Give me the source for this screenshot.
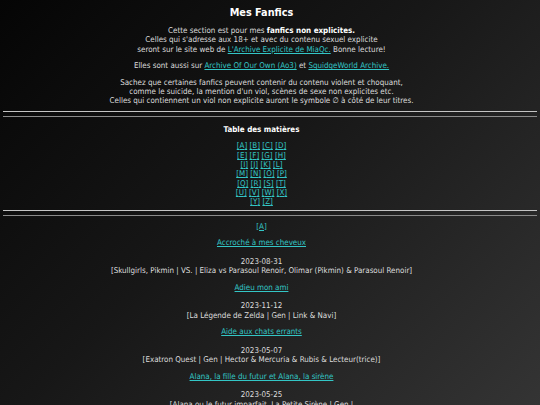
const font = { fontFamily: '"DejaVu Sans Condensed", "DejaVu Sans", Verdana, sans-serif' };

const rows = [
  ["A", "B", "C", "D"],
  ["E", "F", "G", "H"],
  ["I", "J", "K", "L"],
  ["M", "N", "O", "P"],
  ["Q", "R", "S", "T"],
  ["U", "V", "W", "X"],
  ["Y", "Z"],
];

const fics = [
  {
    title: "Accroché à mes cheveux",
    date: "2023-08-31",
    tags: "[Skullgirls, Pikmin | VS. | Eliza vs Parasoul Renoir, Olimar (Pikmin) & Parasoul Renoir]",
  },
  { title: "Adieu mon ami", date: "2023-11-12", tags: "[La Légende de Zelda | Gen | Link & Navi]" },
  {
    title: "Aide aux chats errants",
    date: "2023-05-07",
    tags: "[Exatron Quest | Gen | Hector & Mercuria & Rubis & Lecteur(trice)]",
  },
  {
    title: "Alana, la fille du futur et Alana, la sirène",
    date: "2023-05-25",
    tags: "[Alana ou le futur imparfait, La Petite Sirène | Gen |",
  },
];

function Link({ children }: { children: React.ReactNode }) {
  return <a className="text-[#33c6c6] underline underline-offset-1">{children}</a>;
}

function Rule() {
  return (
    <div className="mx-[3px]">
      <div className="h-px bg-[#c4c4c4]"></div>
      <div className="mt-[4px] h-px bg-[#8a8a8a]"></div>
    </div>
  );
}

export default function App() {
  return (
    <div
      className="h-screen overflow-hidden bg-[linear-gradient(135deg,#050505_0%,#171717_45%,#343434_100%)] text-center text-[7.95px] leading-[9.4px] text-[#dedede]"
      style={font}
    >
      <div className="pr-[17px]">
        <h1 className="pt-[6px] text-[10.8px] leading-[13px] font-bold text-white">Mes Fanfics</h1>

        <p className="mt-[7px]">
          Cette section est pour mes <b className="text-white">fanfics non explicites.</b>
          <br />
          Celles qui s'adresse aux 18+ et avec du contenu sexuel explicite
          <br />
          seront sur le site web de <Link>L'Archive Explicite de MiaQc.</Link> Bonne lecture!
        </p>

        <p className="mt-[7px]">
          Elles sont aussi sur <Link>Archive Of Our Own (Ao3)</Link> et <Link>SquidgeWorld Archive.</Link>
        </p>

        <p className="mt-[7px]">
          Sachez que certaines fanfics peuvent contenir du contenu violent et choquant,
          <br />
          comme le suicide, la mention d'un viol, scènes de sexe non explicites etc.
          <br />
          Celles qui contiennent un viol non explicite auront le symbole ∅ à côté de leur titres.
        </p>
      </div>

      <div className="mt-[5px]">
        <Rule />
      </div>

      <div className="pr-[17px]">
        <p className="mt-[8px] font-bold text-white">Table des matières</p>

        <div className="mt-[7px] leading-[9.33px]">
          {rows.map((row, i) => (
            <div key={i}>
              {row.map((l, j) => (
                <span key={l}>
                  {j > 0 && " "}
                  <Link>[{l}]</Link>
                </span>
              ))}
            </div>
          ))}
        </div>
      </div>

      <div className="mt-[3px]">
        <Rule />
      </div>

      <div className="pr-[17px]">
        <p className="mt-[6px]">
          <Link>[A]</Link>
        </p>

        {fics.map((f) => (
          <div key={f.title}>
            <p className="mt-[7.3px]">
              <Link>{f.title}</Link>
            </p>
            <p className="mt-[9px]">
              {f.date}
              <br />
              {f.tags}
            </p>
          </div>
        ))}
      </div>
    </div>
  );
}
